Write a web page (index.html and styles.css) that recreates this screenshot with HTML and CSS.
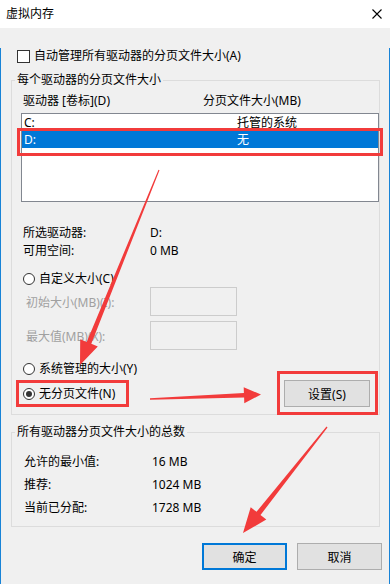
FILE: index.html
```html
<!DOCTYPE html>
<html>
  <head>
    <title>虚拟内存</title>
    <link rel="stylesheet" href="styles.css">
  </head>
  <body>
    <div class="window">
      <div class="titlebar">
        <span class="title">虚拟内存</span>
        <svg class="close" width="10" height="10" viewBox="0 0 10 10">
          <path d="M0.5 0.5 L9.5 9.5 M9.5 0.5 L0.5 9.5" stroke="#000" stroke-width="1.1" fill="none"/>
        </svg>
      </div>

      <div class="client">
        <label class="check-row"><span class="checkbox"></span>自动管理所有驱动器的分页文件大小(A)</label>

        <fieldset class="group group-drives">
          <legend>每个驱动器的分页文件大小</legend>
          <div class="list-head">
            <span class="col-drive">驱动器 [卷标](D)</span>
            <span>分页文件大小(MB)</span>
          </div>
          <div class="drive-list">
            <div class="drive-row"><span class="col-drive">C:</span><span>托管的系统</span></div>
            <div class="drive-row selected"><span class="col-drive">D:</span><span>无</span></div>
          </div>

          <div class="info-row first"><span class="info-label">所选驱动器:</span><span>D:</span></div>
          <div class="info-row"><span class="info-label">可用空间:</span><span>0 MB</span></div>

          <div class="radio-row custom"><span class="radio"></span>自定义大小(C)</div>
          <div class="size-row"><span class="size-label">初始大小(MB)(I):</span><span class="size-input"></span></div>
          <div class="size-row second"><span class="size-label">最大值(MB)(X):</span><span class="size-input"></span></div>
          <div class="radio-row system"><span class="radio"></span>系统管理的大小(Y)</div>
          <div class="last-row">
            <div class="radio-row"><span class="radio checked"></span>无分页文件(N)</div>
            <button class="btn btn-set">设置(S)</button>
          </div>
        </fieldset>

        <fieldset class="group group-total">
          <legend>所有驱动器分页文件大小的总数</legend>
          <div class="total-row"><span class="total-label">允许的最小值:</span><span>16 MB</span></div>
          <div class="total-row"><span class="total-label">推荐:</span><span>1024 MB</span></div>
          <div class="total-row"><span class="total-label">当前已分配:</span><span>1728 MB</span></div>
        </fieldset>

        <div class="footer">
          <button class="btn btn-default">确定</button>
          <button class="btn">取消</button>
        </div>
      </div>

      <!-- red annotations drawn over the dialog -->
      <svg class="marks" width="391" height="585" viewBox="0 0 391 585">
        <g fill="none" stroke="#f23b3b" stroke-width="3">
          <rect x="18.5" y="129.5" width="363" height="25"/>
          <rect x="17.5" y="381.5" width="110" height="24"/>
          <rect x="278.5" y="372.5" width="98" height="41"/>
        </g>
        <g fill="#f23b3b">
          <polygon points="159.5,170.2 91.3,343.7 97.8,346.4 80,365 80.2,339.2 86.7,341.9 158.5,169.8"/>
          <polygon points="150,398.2 243.9,393 243.7,387.2 261,394.5 244.3,403.2 244.1,397.4 150,399.8"/>
          <polygon points="327.5,427.4 260.5,515 266.3,519.6 243,533 250.7,507.2 256.5,511.8 326.5,426.6"/>
        </g>
      </svg>
    </div>
  </body>
</html>
```

FILE: styles.css
```css
body {
  margin: 0;
  padding: 0;
  background: #fff;
  font-family: "Noto Sans", "Noto Sans CJK SC", sans-serif;
  font-size: 12px;
  color: #000;
}
.window {
  position: relative;
  width: 390px;
  height: 584px;
  background: #f0f0f0;
}
.titlebar {
  height: 28px;
  background: #fff;
  display: flex;
  align-items: center;
  justify-content: space-between;
  padding: 0 8px 0 6px;
  box-sizing: border-box;
}
.title {
  font-size: 12px;
  line-height: 16px;
}
.client {
  height: 556px;
  border: 1px solid #1883d7;
  border-top: none;
  box-sizing: border-box;
  padding: 0 9px 0 10px;
}
.check-row {
  display: flex;
  align-items: center;
  gap: 4px;
  height: 16px;
  margin-top: 20px;
  padding-left: 6px;
  line-height: 16px;
}
.checkbox {
  width: 13px;
  height: 13px;
  border: 1px solid #333;
  background: #fff;
  box-sizing: border-box;
}
.group {
  margin: 8px 0 0 0;
  width: 369px;
  min-width: 0;
  box-sizing: border-box;
  border: 1px solid #dcdcdc;
  padding: 5px 9px 7px 9px;
}
.group legend {
  padding: 0 2px;
  margin-left: -6px;
  line-height: 16px;
}
.list-head {
  display: flex;
  padding-left: 2px;
  line-height: 16px;
}
.list-head .col-drive {
  width: 180px;
}
.drive-list {
  margin-top: 4px;
  width: 358px;
  height: 89px;
  border: 1px solid #828790;
  background: #fff;
  box-sizing: border-box;
}
.drive-row {
  display: flex;
  height: 17px;
  line-height: 17px;
  padding-left: 2px;
}
.drive-row .col-drive {
  width: 213px;
}
.drive-row.selected {
  background: #0078d7;
  color: #fff;
}
.info-row {
  display: flex;
  padding-left: 2px;
  line-height: 18px;
}
.info-row.first {
  margin-top: 22px;
}
.info-label {
  width: 127px;
}
.radio-row {
  display: flex;
  align-items: center;
  gap: 4px;
  height: 17px;
  padding-left: 2px;
  line-height: 17px;
}
.radio-row.custom {
  margin-top: 10px;
}
.radio-row.system {
  margin-top: 10px;
}
.radio {
  position: relative;
  width: 12px;
  height: 12px;
  border: 1px solid #333;
  border-radius: 50%;
  background: #fff;
  box-sizing: border-box;
}
.radio.checked::after {
  content: "";
  position: absolute;
  left: 2px;
  top: 2px;
  width: 6px;
  height: 6px;
  border-radius: 50%;
  background: #333;
}
.size-row {
  display: flex;
  align-items: center;
  height: 29px;
  padding-left: 5px;
}
.size-row.second {
  margin-top: 5px;
}
.size-label {
  width: 124px;
  color: #a0a0a0;
}
.size-input {
  width: 87px;
  height: 29px;
  border: 1px solid #ccc;
  background: #f0f0f0;
  box-sizing: border-box;
}
.last-row {
  display: flex;
  align-items: center;
  justify-content: space-between;
  margin-top: 3px;
  height: 27px;
}
.btn {
  width: 85px;
  height: 27px;
  padding: 0;
  background: #e1e1e1;
  border: 1px solid #adadad;
  font-family: "Noto Sans", "Noto Sans CJK SC", sans-serif;
  font-size: 12px;
  color: #000;
  box-sizing: border-box;
}
.btn-set {
  width: 86px;
}
.btn-default {
  border: 2px solid #0078d7;
}
.group-total {
  margin-top: 9px;
  padding-top: 10px;
}
.total-row {
  display: flex;
  padding-left: 3px;
  line-height: 23px;
}
.total-label {
  width: 128px;
}
.footer {
  display: flex;
  justify-content: flex-end;
  gap: 10px;
  margin-top: 16px;
  margin-right: -2px;
}
.marks {
  position: absolute;
  left: 0;
  top: 0;
  pointer-events: none;
}
```
